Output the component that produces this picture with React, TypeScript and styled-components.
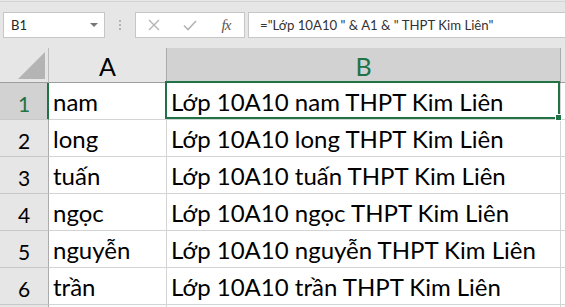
import React from 'react';
import styled, { createGlobalStyle } from 'styled-components';

const Global = createGlobalStyle`
  html, body { margin: 0; padding: 0; background: #e6e6e6; }
  body { overflow: hidden; }
  #root { width: 565px; height: 307px; overflow: hidden; }
`;

const GREEN = '#217346';

const Page = styled.div`
  width: 565px;
  height: 307px;
  display: flex;
  flex-direction: column;
  background: #e6e6e6;
  overflow: hidden;
  font-family: Lato, "Noto Sans", sans-serif;
`;

const FormulaBar = styled.div`
  height: 47px;
  box-sizing: border-box;
  margin-top: 1px;
  border-top: 1px solid #d4d4d4;
  display: flex;
  align-items: flex-start;
  padding: 10px 0 0 3px;
  flex-shrink: 0;
`;

const NameBox = styled.div`
  width: 102px;
  height: 26px;
  box-sizing: border-box;
  border: 1px solid #c6c6c6;
  background: #fff;
  display: flex;
  align-items: center;
  justify-content: space-between;
  padding: 0 6px 0 7px;
  font-size: 13px;
  color: #262626;
`;

const DropArrow = styled.span`
  width: 0;
  height: 0;
  border-left: 4px solid transparent;
  border-right: 4px solid transparent;
  border-top: 4px solid #777;
`;

const Grip = styled.div`
  width: 30px;
  height: 26px;
  display: flex;
  flex-direction: column;
  align-items: center;
  justify-content: center;
  gap: 2px;
`;

const GripDot = styled.span`
  width: 2px;
  height: 2px;
  background: #b4b4b4;
`;

const ButtonBox = styled.div`
  width: 110px;
  height: 26px;
  box-sizing: border-box;
  border: 1px solid #c6c6c6;
  background: #fff;
  display: grid;
  grid-template-columns: repeat(3, 36px);
`;

const IconSlot = styled.div`
  display: flex;
  align-items: center;
  justify-content: center;
`;

const FxText = styled.span`
  font-family: "Liberation Serif", serif;
  font-style: italic;
  font-size: 15px;
  color: #555;
  letter-spacing: -1px;
`;

const FormulaInput = styled.div`
  flex: 1;
  margin-left: 3px;
  margin-right: -10px;
  height: 26px;
  box-sizing: border-box;
  border: 1px solid #c6c6c6;
  background: #fff;
  display: flex;
  align-items: center;
  padding-left: 11px;
  font-size: 13.2px;
  color: #333;
  white-space: nowrap;
`;

const Sheet = styled.div`
  display: grid;
  grid-template-columns: 49px 118px 394px 1fr;
  grid-template-rows: 35px;
  grid-auto-rows: 37px;
  background: #fff;
`;

const Corner = styled.div`
  box-sizing: border-box;
  background: #e6e6e6;
  border-right: 1px solid #bdbdbd;
  border-bottom: 1px solid #9e9e9e;
  display: flex;
  align-items: flex-end;
  justify-content: flex-end;
  padding: 0 3px 3px 0;
`;

const CornerTriangle = styled.div`
  width: 0;
  height: 0;
  border-left: 27px solid transparent;
  border-bottom: 27px solid #b4b4b4;
`;

const ColHeader = styled.div<{ $selected?: boolean }>`
  box-sizing: border-box;
  background: ${(p) => (p.$selected ? '#d2d2d2' : '#e6e6e6')};
  color: ${(p) => (p.$selected ? GREEN : '#000')};
  border-right: 1px solid #ababab;
  border-bottom: 1px solid ${(p) => (p.$selected ? GREEN : '#9e9e9e')};
  box-shadow: ${(p) => (p.$selected ? `inset 0 -1px 0 ${GREEN}` : 'none')};
  display: flex;
  align-items: center;
  justify-content: center;
  padding-top: 1px;
  font-size: 25px;
  overflow: hidden;
`;

const RowHeader = styled.div<{ $selected?: boolean }>`
  box-sizing: border-box;
  background: ${(p) => (p.$selected ? '#d2d2d2' : '#e6e6e6')};
  color: ${(p) => (p.$selected ? GREEN : '#000')};
  border-right: 1px solid ${(p) => (p.$selected ? GREEN : '#ababab')};
  border-bottom: 1px solid #c8c8c8;
  box-shadow: ${(p) => (p.$selected ? `inset -1px 0 0 ${GREEN}` : 'none')};
  display: flex;
  align-items: center;
  justify-content: center;
  padding-top: 4px;
  font-size: 21px;
`;

const Cell = styled.div`
  position: relative;
  box-sizing: border-box;
  border-right: 1px solid #d4d4d4;
  border-bottom: 1px solid #d4d4d4;
  display: flex;
  align-items: center;
  padding: 1px 0 0 4px;
  font-size: 24px;
  color: #000;
  white-space: nowrap;
`;

const Selection = styled.div`
  position: absolute;
  top: -2px;
  left: -2px;
  right: 0;
  bottom: 0;
  border: 2px solid ${GREEN};
  pointer-events: none;
  z-index: 2;
`;

const FillHandle = styled.div`
  position: absolute;
  right: -4px;
  bottom: -4px;
  width: 5px;
  height: 5px;
  background: ${GREEN};
  border: 1px solid #fff;
`;

const names = ['nam', 'long', 'tuấn', 'ngọc', 'nguyễn', 'trần'];

export default function App() {
  return (
    <Page>
      <Global />
      <FormulaBar>
        <NameBox>
          <span>B1</span>
          <DropArrow />
        </NameBox>
        <Grip>
          <GripDot />
          <GripDot />
          <GripDot />
        </Grip>
        <ButtonBox>
          <IconSlot>
            <svg width="12" height="12" viewBox="0 0 12 12">
              <path d="M1 1 L11 11 M11 1 L1 11" stroke="#b4b4b4" strokeWidth="1.4" fill="none" />
            </svg>
          </IconSlot>
          <IconSlot>
            <svg width="14" height="11" viewBox="0 0 14 11">
              <path d="M1 5.5 L5 9.5 L13 1" stroke="#b4b4b4" strokeWidth="1.6" fill="none" />
            </svg>
          </IconSlot>
          <IconSlot>
            <FxText>fx</FxText>
          </IconSlot>
        </ButtonBox>
        <FormulaInput>="Lớp 10A10 " &amp; A1 &amp; " THPT Kim Liên"</FormulaInput>
      </FormulaBar>
      <Sheet>
        <Corner>
          <CornerTriangle />
        </Corner>
        <ColHeader>A</ColHeader>
        <ColHeader $selected>B</ColHeader>
        <ColHeader />
        {names.map((n, i) => (
          <React.Fragment key={n}>
            <RowHeader $selected={i === 0}>{i + 1}</RowHeader>
            <Cell>{n}</Cell>
            <Cell>
              Lớp 10A10 {n} THPT Kim Liên
              {i === 0 && (
                <Selection>
                  <FillHandle />
                </Selection>
              )}
            </Cell>
            <Cell />
          </React.Fragment>
        ))}
        <RowHeader />
        <Cell />
        <Cell />
        <Cell />
      </Sheet>
    </Page>
  );
}
